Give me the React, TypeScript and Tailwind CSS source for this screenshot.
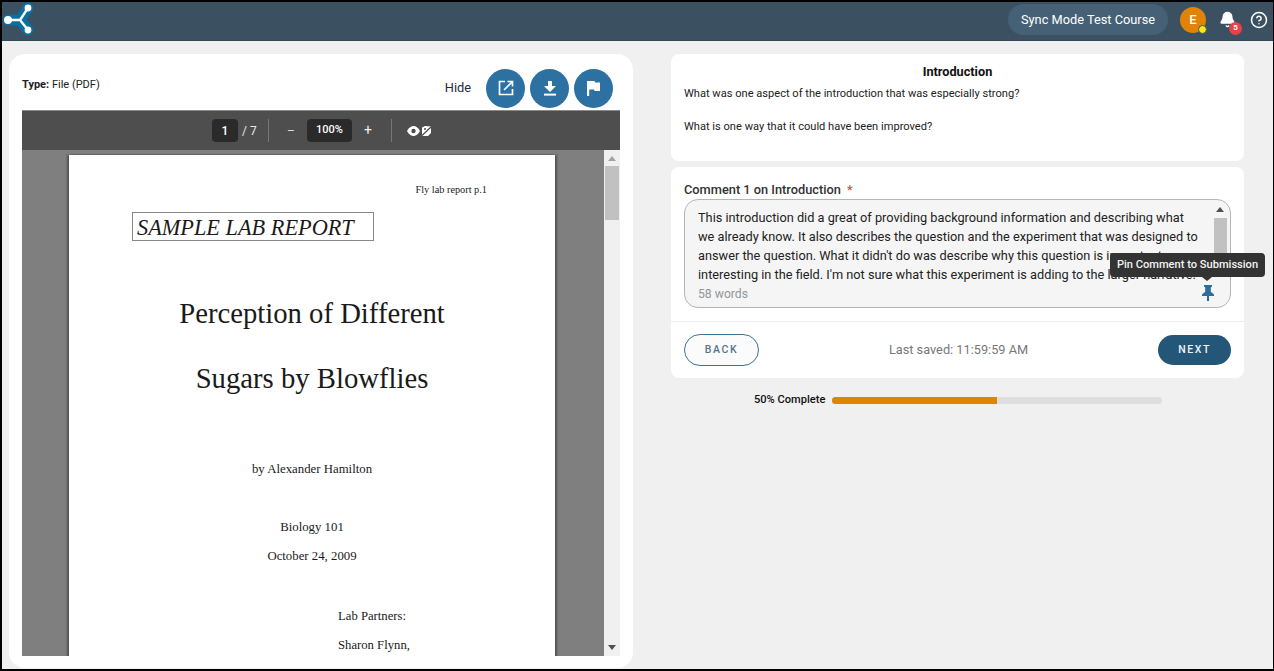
import { Bell, CircleHelp } from 'lucide-react';

function Logo() {
  return (
    <svg width="32" height="34" viewBox="0 0 32 34" className="ml-[2px] shrink-0 overflow-visible">
      <g stroke="#0a6f9f" strokeWidth="11" strokeLinecap="round" strokeLinejoin="round" fill="none">
        <path d="M4 17 L16 17 L24 5 M16 17 L24 27" />
      </g>
      <g stroke="#ffffff" strokeWidth="2.4" fill="none">
        <path d="M4 17 L16 17 M16 17 L24 5 M16 17 L24 27" />
      </g>
      <circle cx="4" cy="17" r="4" fill="#fff" />
      <circle cx="24" cy="5" r="3.4" fill="#fff" />
      <circle cx="24" cy="27" r="3.4" fill="#fff" />
    </svg>
  );
}

function RoundBtn({ children }: { children: React.ReactNode }) {
  return (
    <div className="w-[39px] h-[39px] rounded-full bg-[#2c71a1] flex items-center justify-center">
      {children}
    </div>
  );
}

function PdfViewer() {
  return (
    <div className="flex-1 min-h-0 flex flex-col overflow-hidden">
      {/* toolbar */}
      <div className="h-[40px] shrink-0 bg-[#4e4e4e] border-t border-[#8a8a8a] flex items-center text-white text-[12px]">
        <div className="ml-[190px] w-[26px] h-[23px] bg-[#2a2a2a] rounded-sm flex items-center justify-center font-medium">1</div>
        <span className="ml-[4px] w-[22px] text-[#e8e8e8]">/ 7</span>
        <div className="ml-[4px] w-px h-[23px] bg-[#777]" />
        <span className="ml-[18px] w-[10px] text-[#ddd]">–</span>
        <div className="ml-[10px] w-[45px] h-[23px] bg-[#2a2a2a] rounded-sm flex items-center justify-center text-[11px] font-medium">100%</div>
        <span className="ml-[12px] w-[10px] text-[#eee] text-[14px]">+</span>
        <div className="ml-[17px] w-px h-[23px] bg-[#777]" />
        <svg width="25" height="12" viewBox="0 0 25 12" className="ml-[15px]">
          <path d="M0 6 C2 2 5 1 6.5 1 C8 1 11 2 13 6 C11 10 8 11 6.5 11 C5 11 2 10 0 6Z" fill="#fff" />
          <circle cx="6.5" cy="6" r="2.2" fill="#4e4e4e" />
          <path d="M15 2.5 L18 1 L24 1.5 L24 8 L21 11 L15 11 Z" fill="#fff" />
          <path d="M15 10.5 L24 2" stroke="#4e4e4e" strokeWidth="1.3" />
          <circle cx="18" cy="4" r="1" fill="#4e4e4e" />
        </svg>
      </div>
      {/* document area */}
      <div className="flex-1 min-h-0 flex">
        <div className="flex-1 bg-[#7f7f7f] pl-[47px] pt-[5px] overflow-hidden">
          <div className="w-[486px] h-[600px] bg-white shadow-[-2px_0_2px_rgba(0,0,0,0.35),2px_0_2px_rgba(0,0,0,0.35)] text-[#1a1a1a] font-['Liberation_Serif',serif]">
            <p className="text-[10.3px] leading-[12px] pt-[29px] pr-[68px] text-right">Fly lab report p.1</p>
            <div className="ml-[63px] mt-[16px] w-[242px] h-[29px] border border-[#888] pl-[4px] pt-[1px] italic text-[22.3px] leading-[27px] whitespace-nowrap">
              SAMPLE LAB REPORT
            </div>
            <div className="text-center">
              <p className="mt-[54px] text-[28.7px] leading-[36px]">Perception of Different</p>
              <p className="mt-[29px] text-[28.7px] leading-[36px]">Sugars by Blowflies</p>
              <p className="mt-[65px] text-[12.8px] leading-[16px]">by Alexander Hamilton</p>
              <p className="mt-[42px] text-[12.8px] leading-[16px]">Biology 101</p>
              <p className="mt-[13px] text-[12.8px] leading-[16px]">October 24, 2009</p>
            </div>
            <p className="mt-[44px] ml-[269px] text-[12.7px] leading-[16px]">Lab Partners:</p>
            <p className="mt-[13px] ml-[269px] text-[12.7px] leading-[16px]">Sharon Flynn,</p>
          </div>
        </div>
        <div className="w-[16px] bg-[#f0f0f0] flex flex-col items-center">
          <div className="h-[16px] flex items-center justify-center">
            <div className="w-0 h-0 border-l-[4px] border-r-[4px] border-b-[5px] border-l-transparent border-r-transparent border-b-[#a3a3a3]" />
          </div>
          <div className="w-[14px] h-[54px] bg-[#c1c1c1]" />
          <div className="flex-1" />
          <div className="h-[18px] flex items-center justify-center">
            <div className="w-0 h-0 border-l-[4px] border-r-[4px] border-t-[5px] border-l-transparent border-r-transparent border-t-[#505050]" />
          </div>
        </div>
      </div>
    </div>
  );
}

export default function App() {
  return (
    <div className="w-[1274px] h-[671px] overflow-hidden border-t-2 border-l-2 border-b-2 border-r border-black bg-[#f0f0f0] flex flex-col font-['Roboto',sans-serif]">
      {/* top bar */}
      <header className="h-[39px] shrink-0 bg-[#3b5162] border-b border-[#33485a] flex items-center pb-[3px]">
        <Logo />
        <div className="flex-1" />
        <div className="h-[31px] w-[160px] rounded-full bg-[#466176] text-white text-[12.8px] flex items-center justify-center">
          Sync Mode Test Course
        </div>
        <div className="relative ml-[12px] w-[26px] h-[26px] rounded-full bg-[#e08306] text-white text-[13px] font-medium flex items-center justify-center">
          E
          <span className="absolute right-[-1px] bottom-[-1px] w-[7px] h-[7px] rounded-full bg-[#f5ea14] border border-[#3b5162] box-content" />
        </div>
        <div className="relative ml-[13px] w-[18px] h-[18px]">
          <Bell size={17} fill="#fff" color="#fff" />
          <span className="absolute left-[10px] top-[11px] w-[13px] h-[13px] rounded-full bg-[#ea4149] text-white text-[8px] font-bold flex items-center justify-center">5</span>
        </div>
        <CircleHelp size={18} color="#fff" strokeWidth={2} className="ml-[13px] mr-[5px]" />
      </header>

      <main className="flex-1 min-h-0 flex">
        {/* left: document */}
        <section className="ml-[7px] mt-[13px] mb-[1px] w-[624px] bg-white rounded-2xl flex flex-col pl-[13px] pr-[13px] pb-[12px]">
          <div className="h-[56px] shrink-0 flex items-center pt-[12px] pr-[7px]">
            <p className="text-[11px] text-[#222] mb-[5px]">
              <span className="font-bold">Type:</span> File (PDF)
            </p>
            <div className="flex-1" />
            <span className="text-[12.8px] text-[#1d2b3a] mr-[15px]">Hide</span>
            <div className="flex gap-[5px]">
              <RoundBtn>
                <svg width="16" height="16" viewBox="0 0 16 16" fill="none" stroke="#fff" strokeWidth="1.7">
                  <path d="M7 1.5H1.5v13h13V9" />
                  <path d="M6 10 L14 2 M9.5 1.5h5v5" />
                </svg>
              </RoundBtn>
              <RoundBtn>
                <svg width="14" height="15" viewBox="0 0 14 15" fill="#fff">
                  <path d="M5 0h4v5h4l-6 6-6-6h4z" />
                  <rect x="1" y="12.6" width="12" height="2" />
                </svg>
              </RoundBtn>
              <RoundBtn>
                <svg width="13" height="15" viewBox="0 0 13 15" fill="#fff">
                  <path d="M0 0h7.5l.6 1.6H13v8.4H7.6L7 8.4H2.2V15H0z" />
                </svg>
              </RoundBtn>
            </div>
          </div>
          <PdfViewer />
        </section>

        {/* right: comment form */}
        <section className="ml-[38px] mt-[13px] w-[573px] flex flex-col">
          <div className="h-[107px] bg-white rounded-lg px-[13px] pt-[10px] text-[11.1px] text-[#222]">
            <h2 className="text-center text-[12.7px] font-bold text-[#111] leading-[15px]">Introduction</h2>
            <p className="mt-[8px] leading-[14px]">What was one aspect of the introduction that was especially strong?</p>
            <p className="mt-[19px] leading-[14px]">What is one way that it could have been improved?</p>
          </div>

          <div className="mt-[6px] h-[211px] bg-white rounded-lg flex flex-col">
            <div className="px-[13px] pt-[15px]">
              <div className="text-[12.8px] leading-[15px] font-medium text-[#333]">
                Comment 1 on Introduction <span className="text-[#f0443c] ml-[3px]">*</span>
              </div>
              <div className="relative mt-[2px] h-[109px] w-[547px] rounded-[14px] border border-[#b5b5b5] bg-[#f5f5f5] pl-[13px] pr-[34px] pt-[8px]">
                <p className="text-[12.75px] leading-[19px] text-[#222] whitespace-nowrap">
                  This introduction did a great of providing background information and describing what<br />
                  we already know. It also describes the question and the experiment that was designed to<br />
                  answer the question. What it didn't do was describe why this question is important or<br />
                  interesting in the field. I'm not sure what this experiment is adding to the larger narrative.
                </p>
                <p className="mt-[1px] text-[12.2px] leading-[19px] text-[#8f979e]">58 words</p>
                {/* textarea scrollbar */}
                <div className="absolute right-[3px] top-[1px] w-[14px] flex flex-col items-center">
                  <div className="h-[17px] flex items-center">
                    <div className="w-0 h-0 border-l-[4px] border-r-[4px] border-b-[5px] border-l-transparent border-r-transparent border-b-[#505050]" />
                  </div>
                  <div className="w-[13px] h-[54px] bg-[#c1c1c1]" />
                </div>
                {/* pin */}
                <svg width="12" height="16" viewBox="0 0 12 16" fill="#2b6d9c" className="absolute right-[16px] bottom-[6px]">
                  <path d="M2 0h8v1.5L8.8 2.4v4.4L12 9.4V11H7v5H5v-5H0V9.4l3.2-2.6V2.4L2 1.5z" />
                </svg>
                {/* tooltip */}
                <div className="absolute left-[425px] top-[53px] w-[155px] h-[24px] rounded bg-[#333333] text-[#f2f2f2] text-[11.1px] font-medium flex items-center justify-center whitespace-nowrap">
                  Pin Comment to Submission
                  <div className="absolute left-[92px] bottom-[-4px] w-0 h-0 border-l-[5px] border-r-[5px] border-t-[4px] border-l-transparent border-r-transparent border-t-[#333333]" />
                </div>
              </div>
            </div>
            <div className="mt-[13px] border-t border-[#eeeeee] flex-1 px-[13px] flex items-center justify-between">
              <button className="w-[75px] h-[32px] rounded-full border border-[#3f7297] bg-[#fbfbfb] text-[#56748c] text-[10.5px] font-medium tracking-[0.15em]">BACK</button>
              <span className="text-[12.75px] text-[#777]">Last saved: 11:59:59 AM</span>
              <button className="w-[73px] h-[30px] rounded-full bg-[#235677] text-[#f0f4f7] text-[10.5px] font-medium tracking-[0.15em]">NEXT</button>
            </div>
          </div>

          <div className="mt-[14px] flex items-center pl-[83px]">
            <span className="text-[11.1px] font-medium text-[#111] w-[78px] whitespace-nowrap">50% Complete</span>
            <div className="w-[330px] h-[7px] rounded-full bg-[#dedede] overflow-hidden">
              <div className="h-full w-1/2 bg-[#e08306]" />
            </div>
          </div>
        </section>
      </main>
    </div>
  );
}
